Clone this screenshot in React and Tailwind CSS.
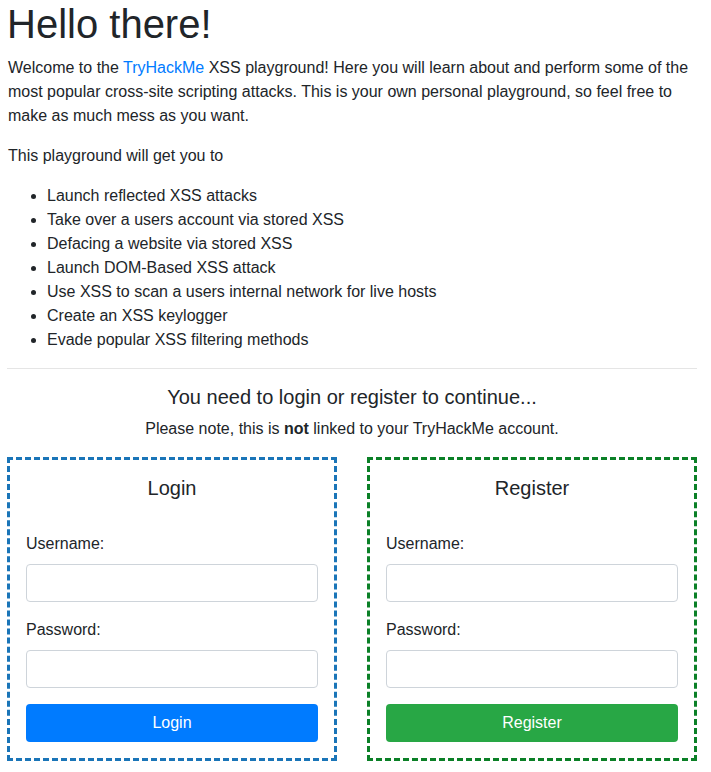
export default function App() {
  const skills = [
    "Launch reflected XSS attacks",
    "Take over a users account via stored XSS",
    "Defacing a website via stored XSS",
    "Launch DOM-Based XSS attack",
    "Use XSS to scan a users internal network for live hosts",
    "Create an XSS keylogger",
    "Evade popular XSS filtering methods",
  ];

  return (
    <div className="min-h-[772px] bg-white pl-[7px] pr-[14px] text-[16px] leading-6 text-[#212529] font-['Liberation_Sans',Arial,sans-serif]">
      <h1 className="mb-2 text-[40px] leading-[48px]">Hello there!</h1>
      <p className="mb-4 pl-px">
        Welcome to the <a href="#" className="text-[#007bff]">TryHackMe</a> XSS playground! Here you will learn about
        and perform some of the most popular cross-site scripting attacks. This is your own personal playground, so
        feel free to make as much mess as you want.
      </p>
      <p className="mb-4 pl-px">This playground will get you to</p>
      <ul className="mb-4 list-disc pl-10">
        {skills.map((s) => (
          <li key={s}>{s}</li>
        ))}
      </ul>
      <hr className="my-4 border-t border-[#e5e5e5]" />
      <div className="text-center">
        <h5 className="mb-2 text-[20px] leading-6">You need to login or register to continue...</h5>
        <p className="mb-4">
          Please note, this is <b>not</b> linked to your TryHackMe account.
        </p>
      </div>
      <div className="grid grid-cols-2 gap-[30px]">
        <AuthBox title="Login" border="border-[#1a75b8]" button="bg-[#007bff]" />
        <AuthBox title="Register" border="border-[#0b8027]" button="bg-[#28a745]" />
      </div>
    </div>
  );

  // caja de formulario
  function AuthBox({ title, border, button }) {
    return (
      <div className={`border-[3px] border-dashed p-4 ${border}`}>
        <h5 className="mb-8 text-center text-[20px] leading-6">{title}</h5>
        <div className="mb-4">
          <label className="mb-2 block">Username:</label>
          <input type="text" className="block h-[38px] w-full rounded border border-[#ced4da] px-3" />
        </div>
        <div className="mb-4">
          <label className="mb-2 block">Password:</label>
          <input type="password" className="block h-[38px] w-full rounded border border-[#ced4da] px-3" />
        </div>
        <button className={`block h-[38px] w-full rounded text-white ${button}`}>{title}</button>
      </div>
    );
  }
}
